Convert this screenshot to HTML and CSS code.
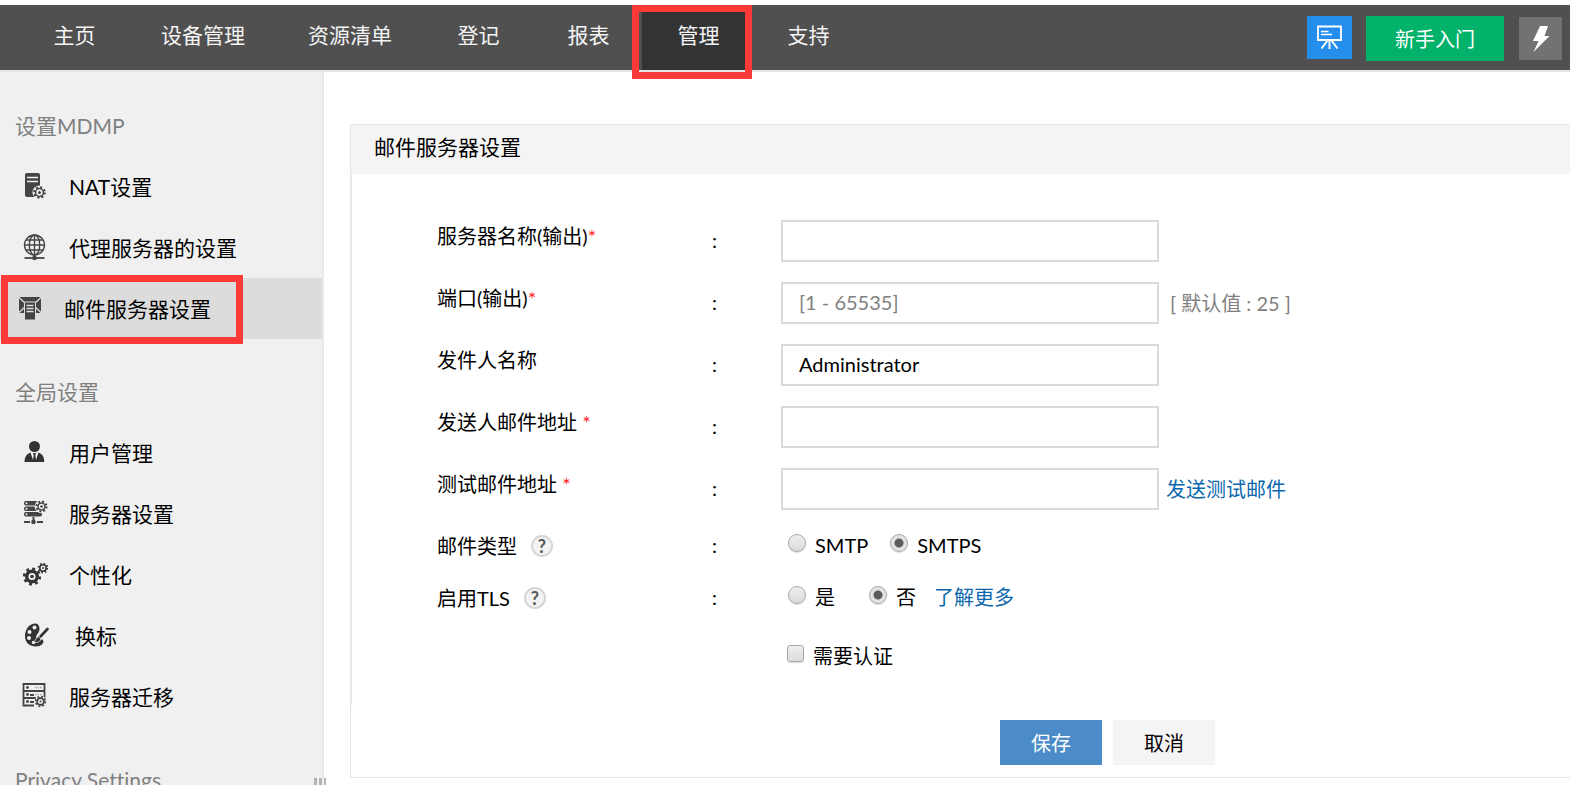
FILE: index.html
```html
<!DOCTYPE html>
<html lang="zh-CN">
<head>
<meta charset="utf-8">
<title>邮件服务器设置</title>
<link rel="stylesheet" href="styles.css">
</head>
<body>
<header class="topbar">
  <nav class="nav">
    <a class="nav-item" href="#">主页</a>
    <a class="nav-item" href="#">设备管理</a>
    <a class="nav-item" href="#">资源清单</a>
    <a class="nav-item" href="#">登记</a>
    <a class="nav-item" href="#">报表</a>
    <a class="nav-item active" href="#">管理<span class="mark mark-nav"></span></a>
    <a class="nav-item" href="#">支持</a>
  </nav>
  <div class="tools">
    <button class="tool tool-demo" type="button" aria-label="演示">
      <svg width="25" height="25" viewBox="0 0 25 25" fill="none" stroke="#fff">
        <path d="M1 1.5H24V15H1Z" stroke-width="1.8"/>
        <path d="M4 6.500H11.500M4 9.500H15" stroke-width="1.500"/>
        <path d="M12.500 15V24M10.500 15.500L4.500 23.500M14.500 15.500L20.500 23.500" stroke-width="2"/>
      </svg>
    </button>
    <button class="tool tool-start" type="button">新手入门</button>
    <button class="tool tool-quick" type="button" aria-label="快捷操作">
      <svg width="18" height="26" viewBox="0 0 18 26"><path d="M8 0H16L12.500 10H17.500L1.500 26L6.500 15H1Z" fill="#fff"/></svg>
    </button>
  </div>
</header>

<div class="layout">
  <aside class="sidebar">
    <h2 class="side-title">设置MDMP</h2>
    <a class="side-item" href="#">
      <svg class="icon" viewBox="0 0 26 28">
        <rect x="3" y="1" width="15" height="24" rx="2" fill="#444"/>
        <path d="M5 5.500H16M5 9.500H16" stroke="#f0f0f0" stroke-width="1.6"/>
        <circle cx="17.500" cy="20.500" r="7" fill="#f0f0f0"/>
        <circle cx="17.500" cy="20.500" r="5.300" fill="none" stroke="#444" stroke-width="2" stroke-dasharray="2 2.163"/>
        <circle cx="17.500" cy="20.500" r="3.900" fill="none" stroke="#444" stroke-width="1.500"/>
        <circle cx="17.500" cy="20.500" r="1.500" fill="#444"/>
      </svg>
      <span>NAT设置</span>
    </a>
    <a class="side-item" href="#">
      <svg class="icon" viewBox="0 0 26 28" fill="none" stroke="#444" stroke-width="1.400">
        <circle cx="12.500" cy="12" r="10"/>
        <ellipse cx="12.500" cy="12" rx="5.200" ry="10"/>
        <path d="M12.500 2V24M2.500 12H22.500M4 7H21M4 17H21"/>
        <path d="M2.500 25H22.500" stroke-width="1.800"/><circle cx="12.500" cy="25" r="1.600" fill="#444"/>
      </svg>
      <span>代理服务器的设置</span>
    </a>
    <a class="side-item selected" href="#">
      <svg class="icon" viewBox="0 0 26 28">
        <path d="M2 3H24V19H2Z" fill="#444"/>
        <path d="M1.500 3L8 9V13L1.500 19M24.500 3L18 9V13L24.500 19" fill="none" stroke="#dcdcdc" stroke-width="1.400"/>
        <path d="M7.500 8H18.500V26H7.500Z" fill="#444" stroke="#dcdcdc"/>
        <path d="M9.500 11.500H16.500M9.500 14.500H16.500M9.500 17.500H16.500" stroke="#dcdcdc" stroke-width="1.400"/>
      </svg>
      <span>邮件服务器设置</span>
      <span class="mark mark-side"></span>
    </a>

    <h2 class="side-title">全局设置</h2>
    <a class="side-item" href="#">
      <svg class="icon" viewBox="0 0 26 28" fill="#333">
        <circle cx="12.500" cy="8.500" r="5.500"/>
        <path d="M2.500 24C2.500 19 4.500 16 8.500 14.500L11 22L11.700 17L11 15H14L13.300 17L14 22L16.500 14.500C20.500 16 22.300 19 22.300 24Z"/>
      </svg>
      <span>用户管理</span>
    </a>
    <a class="side-item" href="#">
      <svg class="icon" viewBox="0 0 26 28">
        <g fill="#444"><rect x="2" y="2" width="18" height="4.500" rx="2"/><rect x="2" y="7.500" width="18" height="4.500" rx="2"/><rect x="2" y="13" width="18" height="4.500" rx="2"/></g>
        <g fill="#f0f0f0"><circle cx="4.500" cy="4.200" r="1"/><circle cx="4.500" cy="9.700" r="1"/><circle cx="4.500" cy="15.200" r="1"/><circle cx="19.500" cy="7.500" r="6.800"/></g>
        <circle cx="19.500" cy="7.500" r="5" fill="none" stroke="#444" stroke-width="2" stroke-dasharray="1.900 2.027"/>
        <circle cx="19.500" cy="7.500" r="3.500" fill="none" stroke="#444" stroke-width="1.500"/>
        <circle cx="19.500" cy="7.500" r="1.300" fill="#444"/>
        <path d="M2 23H8M15 23H21M11.500 18V24" stroke="#444" stroke-width="2"/><circle cx="11.500" cy="23" r="2.300" fill="#444"/>
      </svg>
      <span>服务器设置</span>
    </a>
    <a class="side-item" href="#">
      <svg class="icon" viewBox="0 0 26 28" fill="none" stroke="#333">
        <circle cx="10" cy="16.500" r="5.300" stroke-width="3.400"/>
        <circle cx="10" cy="16.500" r="7.800" stroke-width="2.600" stroke-dasharray="2.800 3.326"/>
        <circle cx="10" cy="16.500" r="1.800" fill="#333" stroke="none"/>
        <circle cx="21" cy="8" r="3.200" stroke-width="1.600"/>
        <circle cx="21" cy="8" r="4.600" stroke-width="1.600" stroke-dasharray="1.600 2.013"/>
        <circle cx="21" cy="8" r="1" fill="#333" stroke="none"/>
      </svg>
      <span>个性化</span>
    </a>
    <a class="side-item indent" href="#">
      <svg class="icon" viewBox="0 0 26 28">
        <path d="M12 2.500C5 3 2 10 2 15C2 22 7 25.500 13 25.500C18 25.500 21.500 22 20 19C18.500 17 15 19 13.500 17C12 14.500 16.500 12 16.500 8C16.500 4.500 15 2.500 12 2.500Z" fill="#333"/>
        <g fill="#f0f0f0"><circle cx="11.500" cy="6.500" r="2"/><circle cx="6.500" cy="11" r="2"/><circle cx="6" cy="17" r="2"/><circle cx="10.500" cy="21.500" r="1.700"/></g>
        <path d="M25 8L16 17.500" stroke="#f0f0f0" stroke-width="5"/>
        <path d="M24.500 8L17 16" stroke="#333" stroke-width="2.600" stroke-linecap="round"/>
        <path d="M17.500 17.500C18 21 14 22 10.500 21.500C13 20 12.500 16 16 15.500Z" fill="#333" stroke="#f0f0f0" stroke-width=".8"/>
      </svg>
      <span>换标</span>
    </a>
    <a class="side-item" href="#">
      <svg class="icon" viewBox="0 0 26 28" fill="none" stroke="#444" stroke-width="1.800">
        <path d="M1.500 2H22.500V9H1.500ZM22.500 9V16M1.500 9V16H14M1.500 16V23.500H12M2 9H22"/>
        <path d="M8 13H12M8 20H12"/>
        <path d="M13 5.500H20M13 12.500H20" stroke="#aaa" stroke-width="1.400" stroke-dasharray="1.500 1"/>
        <g fill="#444" stroke="none"><circle cx="5.500" cy="5.500" r="1.400"/><circle cx="5.500" cy="12.500" r="1.400"/><circle cx="5.500" cy="19.500" r="1.400"/></g>
        <circle cx="18.500" cy="19.500" r="5.800" fill="#f0f0f0" stroke="none"/>
        <circle cx="18.500" cy="19.500" r="4.800" stroke-width="1.800" stroke-dasharray="1.800 1.970"/>
        <circle cx="18.500" cy="19.500" r="3.400"/>
        <circle cx="18.500" cy="19.500" r="1" fill="#444" stroke="none"/>
      </svg>
      <span>服务器迁移</span>
    </a>

    <h2 class="side-title">Privacy Settings</h2>
    <div class="grip"></div>
  </aside>

  <main class="content">
    <form class="panel">
      <h1 class="panel-title">邮件服务器设置</h1>
      <div class="panel-body">
        <div class="row">
          <label class="label" for="server">服务器名称(输出)<i class="req">*</i></label><span class="colon">:</span>
          <div class="field"><input class="text" id="server" type="text"></div>
        </div>
        <div class="row">
          <label class="label" for="port">端口(输出)<i class="req">*</i></label><span class="colon">:</span>
          <div class="field"><input class="text" id="port" type="text" placeholder="[1 - 65535]"><span class="hint">[ 默认值 : 25 ]</span></div>
        </div>
        <div class="row">
          <label class="label" for="sender">发件人名称</label><span class="colon">:</span>
          <div class="field"><input class="text" id="sender" type="text" value="Administrator"></div>
        </div>
        <div class="row">
          <label class="label" for="from">发送人邮件地址 <i class="req">*</i></label><span class="colon">:</span>
          <div class="field"><input class="text" id="from" type="text"></div>
        </div>
        <div class="row">
          <label class="label" for="test">测试邮件地址 <i class="req">*</i></label><span class="colon">:</span>
          <div class="field"><input class="text" id="test" type="text"><a class="link" href="#">发送测试邮件</a></div>
        </div>
        <div class="row row-choice">
          <div class="legend">邮件类型<button class="help" type="button" aria-label="邮件类型帮助">?</button></div><span class="colon">:</span>
          <div class="choices">
            <label class="choice"><input type="radio" name="type">SMTP</label>
            <label class="choice"><input type="radio" name="type" checked>SMTPS</label>
          </div>
        </div>
        <div class="row row-choice">
          <div class="legend">启用TLS<button class="help" type="button" aria-label="TLS帮助">?</button></div><span class="colon">:</span>
          <div class="choices choices-tls">
            <label class="choice"><input type="radio" name="tls">是</label>
            <label class="choice"><input type="radio" name="tls" checked>否</label>
            <a class="more" href="#">了解更多</a>
          </div>
        </div>
        <div class="row row-auth">
          <div class="choices auth"><label class="choice"><input type="checkbox">需要认证</label></div>
        </div>
      </div>
      <div class="actions">
        <button class="btn btn-save" type="submit">保存</button>
        <button class="btn btn-cancel" type="button">取消</button>
      </div>
    </form>
  </main>
</div>
</body>
</html>
```

FILE: styles.css
```css
* { box-sizing: border-box; }

body {
  margin: 0;
  height: 100vh;
  padding-top: 5px;
  display: flex;
  flex-direction: column;
  overflow: hidden;
  background: #fff;
  color: #000;
  font: 400 20px/30px Lato, "Noto Sans CJK SC", sans-serif;
  font-variant-ligatures: none;
}

a { color: inherit; text-decoration: none; }
button, input { font: inherit; color: inherit; }
button { border: 0; padding: 0; cursor: pointer; }

/* Top bar */
.topbar {
  flex: none;
  display: flex;
  justify-content: space-between;
  height: 67px;
  padding: 0 8px 0 18px;
  background: #505050;
  border-bottom: 2px solid #e6e6e6;
  color: #f4f4f4;
  font-size: 21px;
}
.nav { display: flex; }
.nav-item {
  position: relative;
  display: flex;
  align-items: center;
  justify-content: center;
  min-width: 110px;
  padding: 0 30px 6px 33px;
}
.nav-item.active { background: #333; }
.mark {
  position: absolute;
  z-index: 2;
  border: 7px solid #fd3a38;
  pointer-events: none;
}
.mark-nav { inset: 0 0 -9px -10px; }

.tools { display: flex; align-items: flex-start; padding-top: 11px; }
.tool { display: flex; align-items: center; justify-content: center; color: #fff; }
.tool-demo { width: 45px; height: 43px; margin-right: 14px; background: #258eec; }
.tool-start { width: 138px; height: 45px; margin-right: 15px; background: #02b26b; font-size: 20px; }
.tool-quick { width: 43px; height: 43px; margin-top: 1px; background: #727272; }

.layout { flex: 1; min-height: 0; display: flex; }

/* Sidebar */
.sidebar {
  position: relative;
  flex: none;
  width: 324px;
  padding-top: 1px;
  background: #f0f0f0;
  border-right: 2px solid #e9e9e9;
  font-size: 21px;
}
.side-title {
  height: 83px;
  margin: 0;
  padding: 38px 0 0 15px;
  color: #808080;
  font-size: 21px;
  font-weight: 400;
}
.side-item {
  position: relative;
  display: flex;
  align-items: center;
  gap: 21px;
  height: 61px;
  padding-left: 22px;
}
.side-item .icon { flex: none; width: 26px; height: 28px; margin-bottom: 1px; }
.side-item.selected { padding-left: 17px; background: #dcdcdc; }
.side-item.indent { padding-left: 23px; gap: 26px; }
.mark-side { inset: -3px 79px -5px 1px; }
.grip {
  position: absolute;
  right: -4px;
  bottom: 0;
  width: 12px;
  height: 7px;
  background: repeating-linear-gradient(90deg, #b4b4b4 0 3px, #f0f0f0 3px 5px);
}

/* Settings panel */
.content { flex: 1; min-width: 0; padding: 52px 0 0 26px; }
.panel { border: 1px solid #e6e6e6; border-right: 0; }
.panel-title {
  height: 49px;
  margin: 0;
  padding: 7px 23px;
  background: #f4f4f4;
  font-size: 21px;
  font-weight: 400;
}
.panel-body {
  padding: 36px 0 17px 85px;
  border-left: 1px solid #e6e6e6;
}
.row {
  display: grid;
  grid-template-columns: 274px 70px 1fr;
  align-items: center;
  height: 62px;
}
.label { padding-bottom: 10px; }
.req { color: #f22; font-size: 20px; font-style: normal; line-height: 16px; }
.colon { padding: 0 0 2px 1px; }
.field { display: flex; align-items: center; }
.text {
  width: 378px;
  height: 42px;
  padding: 0 16px 2px;
  border: 2px solid #dadada;
  background: #fff;
  outline: 0;
}
.text::placeholder { color: #808080; opacity: 1; }
.hint { margin-left: 11px; color: #808080; }
.link { margin-left: 7px; color: #0b67ad; }

.row-choice { height: 52px; }
.legend { display: flex; align-items: center; gap: 14px; }
.help {
  width: 22px;
  height: 22px;
  border: 2px solid #d6d6d6;
  border-radius: 50%;
  background: #f3f3f3;
  color: #555;
  font: 700 18px/18px Lato, sans-serif;
}
.choices { display: flex; align-items: center; gap: 22px; padding: 0 0 2px 7px; }
.choices-tls { gap: 34px; }
.more { margin-left: -16px; color: #0b67ad; }
.choice { display: flex; align-items: center; gap: 9px; }
.choice input {
  appearance: none;
  width: 18px;
  height: 18px;
  margin: 0 0 5px;
  border: 1px solid #a8a8a8;
  background: linear-gradient(#eee, #dcdcdc);
  box-shadow: 0 1px 1px #ddd;
}
.choice input[type="radio"] { border-radius: 50%; }
.choice input[type="radio"]:checked {
  background: radial-gradient(circle, #5c5c5c 0 4px, #e3e3e3 5px);
}
.choice input[type="checkbox"] { width: 17px; height: 17px; border-radius: 3px; }
.row-auth { height: 64px; }
.auth { grid-column: 3; padding: 0 0 0 6px; }

.actions { display: flex; gap: 11px; padding: 15px 0 12px 649px; }
.btn { width: 102px; height: 45px; }
.btn-save { background: #4a8bc8; color: #fff; }
.btn-cancel { background: #f4f4f4; }
```
